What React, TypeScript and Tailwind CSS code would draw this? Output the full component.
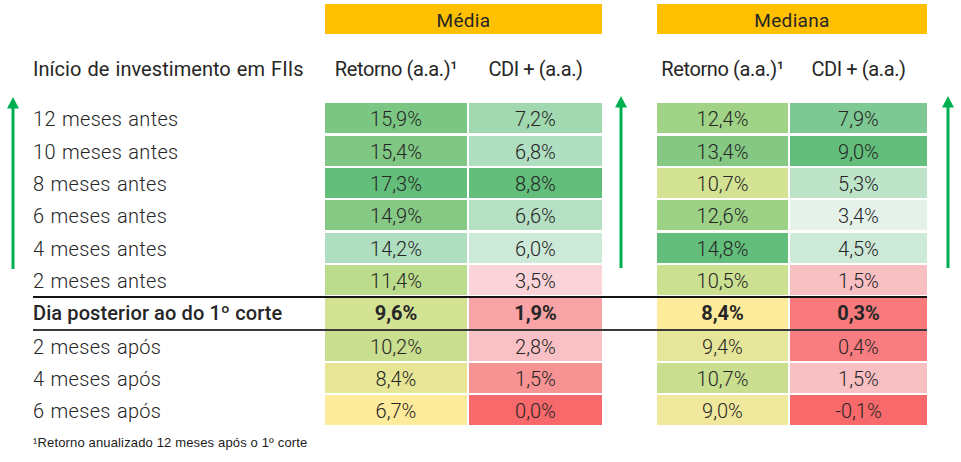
import React from "react";

type Row = { label: string; v: string[]; c: string[] };

const before: Row[] = [
  { label: "12 meses antes", v: ["15,9%", "7,2%", "12,4%", "7,9%"], c: ["bg-[#7bc683]", "bg-[#a2d8b0]", "bg-[#a0d386]", "bg-[#7ec993]"] },
  { label: "10 meses antes", v: ["15,4%", "6,8%", "13,4%", "9,0%"], c: ["bg-[#80c784]", "bg-[#b0dec0]", "bg-[#85c883]", "bg-[#63be7b]"] },
  { label: "8 meses antes", v: ["17,3%", "8,8%", "10,7%", "5,3%"], c: ["bg-[#63be7b]", "bg-[#63be7b]", "bg-[#d3e393]", "bg-[#bde3c9]"] },
  { label: "6 meses antes", v: ["14,9%", "6,6%", "12,6%", "3,4%"], c: ["bg-[#86c985]", "bg-[#b6e0c3]", "bg-[#9cd186]", "bg-[#e5f2ea]"] },
  { label: "4 meses antes", v: ["14,2%", "6,0%", "14,8%", "4,5%"], c: ["bg-[#afdec0]", "bg-[#cde9d7]", "bg-[#63be7b]", "bg-[#cde9d7]"] },
  { label: "2 meses antes", v: ["11,4%", "3,5%", "10,5%", "1,5%"], c: ["bg-[#bcdc8d]", "bg-[#fad4d8]", "bg-[#cbe091]", "bg-[#f9c0c3]"] },
];

const bold: Row = {
  label: "Dia posterior ao do 1º corte",
  v: ["9,6%", "1,9%", "8,4%", "0,3%"],
  c: ["bg-[#d4e393]", "bg-[#f8a3a5]", "bg-[#ffeb9c]", "bg-[#f87a7c]"],
};

const after: Row[] = [
  { label: "2 meses após", v: ["10,2%", "2,8%", "9,4%", "0,4%"], c: ["bg-[#cade8f]", "bg-[#f9c1c5]", "bg-[#e6e69a]", "bg-[#f87d80]"] },
  { label: "4 meses após", v: ["8,4%", "1,5%", "10,7%", "1,5%"], c: ["bg-[#e6e696]", "bg-[#f89394]", "bg-[#c9de8f]", "bg-[#f9c0c3]"] },
  { label: "6 meses após", v: ["6,7%", "0,0%", "9,0%", "-0,1%"], c: ["bg-[#ffeb9c]", "bg-[#f8696b]", "bg-[#f0e89c]", "bg-[#f8696b]"] },
];

const rowStarts = ["row-start-3", "row-start-4", "row-start-5", "row-start-6", "row-start-7", "row-start-8"];
const afterStarts = ["row-start-10", "row-start-11", "row-start-12"];

function Arrow() {
  return (
    <svg width="12" height="172" viewBox="0 0 12 172" className="block">
      <polygon points="6,0 12,11.5 0,11.5" fill="#00b050" />
      <rect x="4.5" y="10" width="3" height="162" fill="#00b050" />
    </svg>
  );
}

function DataRow({ row, start, mb }: { row: Row; start: string; mb: string }) {
  return (
    <div className={`col-start-2 col-end-8 grid grid-cols-subgrid ${start}`}>
      <div className={`pl-[5px] h-[30px] ${mb} font-['Roboto_Light','Roboto',sans-serif] text-[20px] leading-[32px] font-light tracking-[0.3px] [word-spacing:1px] text-[#262626] whitespace-nowrap`}>
        {row.label}
      </div>
      {row.v.slice(0, 2).map((v, i) => (
        <div key={i} className={`h-[30px] ${mb} ${row.c[i]} font-['Roboto_Light','Roboto',sans-serif] text-center text-[20px] leading-[32px] font-light text-[#262626]`}>
          {v}
        </div>
      ))}
      <div />
      {row.v.slice(2).map((v, i) => (
        <div key={i} className={`h-[30px] ${mb} ${row.c[i + 2]} font-['Roboto_Light','Roboto',sans-serif] text-center text-[20px] leading-[32px] font-light text-[#262626]`}>
          {v}
        </div>
      ))}
    </div>
  );
}

export default function App() {
  return (
    <div className="w-[961px] h-[462px] bg-white overflow-hidden font-['Roboto',sans-serif] text-[#262626]">
      <div className="grid grid-cols-[26px_295px_142px_133px_51px_131px_137px_32px] gap-x-[2px] pt-[4px]">
        {/* Row 1: group headers */}
        <div className="row-start-1 col-start-3 col-span-2 h-[30px] bg-[#ffc000] text-center text-[19px] leading-[34px] tracking-[0.3px]">
          Média
        </div>
        <div className="row-start-1 col-start-6 col-span-2 h-[30px] bg-[#ffc000] text-center text-[19px] leading-[34px] tracking-[0.3px]">
          Mediana
        </div>

        {/* Row 2: column headers */}
        <div className="row-start-2 col-start-2 h-[69.3px] pt-[23px] pl-[5px] text-[20px] leading-[24px] tracking-[0.05px] [word-spacing:1px] whitespace-nowrap">
          Início de investimento em FIIs
        </div>
        <div className="row-start-2 col-start-3 pt-[23px] text-center text-[20px] leading-[24px] tracking-[-0.4px] whitespace-nowrap">
          Retorno (a.a.)¹
        </div>
        <div className="row-start-2 col-start-4 pt-[23px] text-center text-[20px] leading-[24px] tracking-[-0.4px] whitespace-nowrap">
          CDI + (a.a.)
        </div>
        <div className="row-start-2 col-start-6 pt-[23px] text-center text-[20px] leading-[24px] tracking-[-0.4px] whitespace-nowrap">
          Retorno (a.a.)¹
        </div>
        <div className="row-start-2 col-start-7 pt-[23px] text-center text-[20px] leading-[24px] tracking-[-0.4px] whitespace-nowrap">
          CDI + (a.a.)
        </div>

        {/* Data rows before */}
        {before.map((r, i) => (
          <DataRow key={r.label} row={r} start={rowStarts[i]} mb={i === 5 ? "mb-[0.4px]" : "mb-[2.4px]"} />
        ))}

        {/* Bold row */}
        <div className="row-start-9 col-start-2 col-end-8 grid grid-cols-subgrid ml-[5px] border-t-2 border-b-2 border-t-[#141414] border-b-[#3a3a3a]">
          <div className="h-[31px] text-[20px] leading-[31px] font-medium tracking-[0.1px] whitespace-nowrap">{bold.label}</div>
          {bold.v.slice(0, 2).map((v, i) => (
            <div key={i} className={`h-[31px] ${bold.c[i]} text-center text-[20px] leading-[31px] font-bold`}>
              {v}
            </div>
          ))}
          <div />
          {bold.v.slice(2).map((v, i) => (
            <div key={i} className={`h-[31px] ${bold.c[i + 2]} text-center text-[20px] leading-[31px] font-bold`}>
              {v}
            </div>
          ))}
        </div>

        {/* Data rows after */}
        {after.map((r, i) => (
          <DataRow key={r.label} row={r} start={afterStarts[i]} mb={i === 2 ? "mb-0" : "mb-[2.4px]"} />
        ))}

        {/* Arrows */}
        <div className="row-start-3 row-span-6 col-start-1 self-start -mt-[6.6px] flex justify-center">
          <Arrow />
        </div>
        <div className="row-start-3 row-span-6 col-start-5 self-start -mt-[7.6px] pl-[11px]">
          <Arrow />
        </div>
        <div className="row-start-3 row-span-6 col-start-8 self-start -mt-[7.6px] pl-[12.5px]">
          <Arrow />
        </div>

        {/* Footnote */}
        <div className="row-start-13 col-start-2 col-span-6 pl-[5px] mt-[10px] font-['Liberation_Sans',sans-serif] text-[13px] leading-[15px] tracking-[0.15px] text-[#1a1a1a] whitespace-nowrap">
          ¹Retorno anualizado 12 meses após o 1º corte
        </div>
      </div>
    </div>
  );
}
